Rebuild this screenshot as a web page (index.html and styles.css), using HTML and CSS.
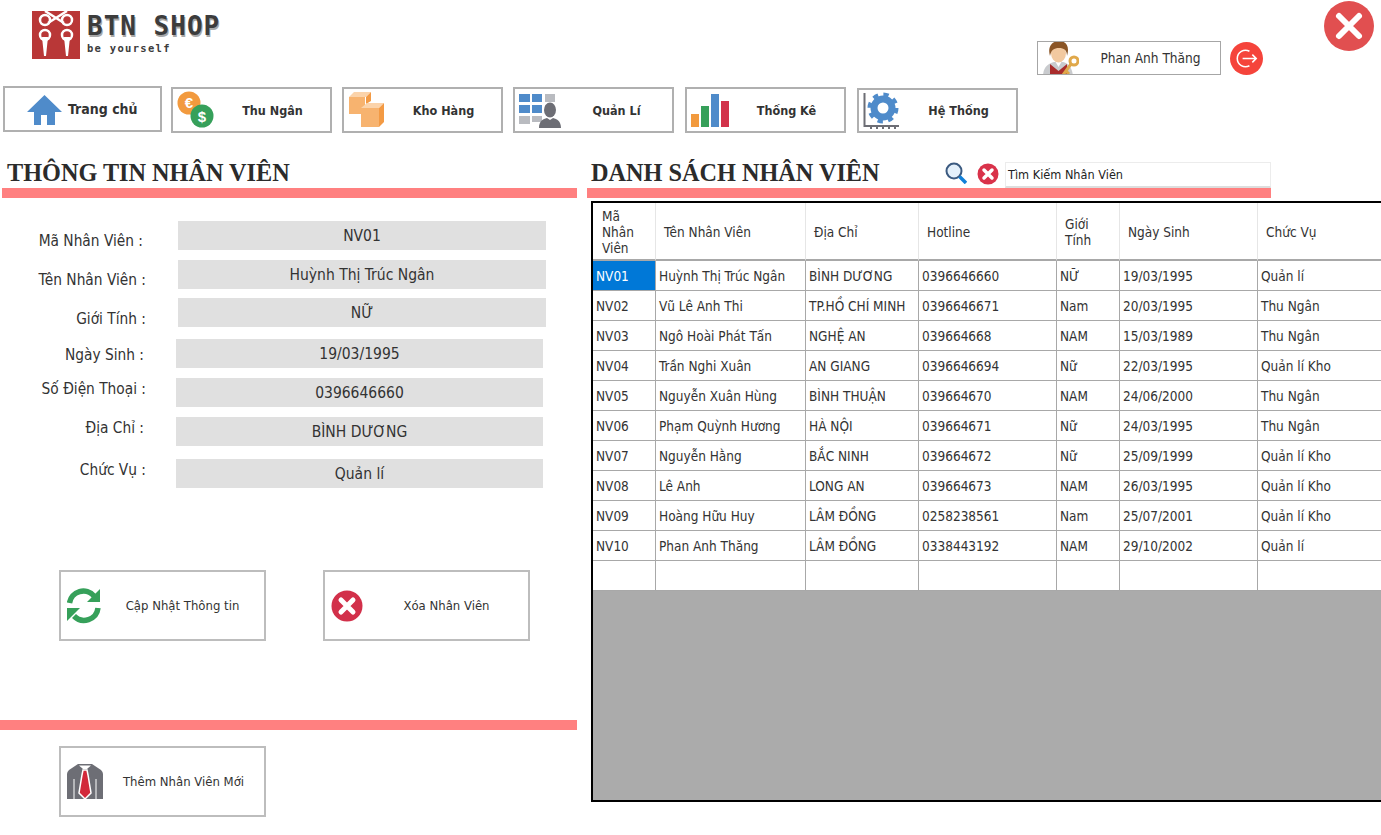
FILE: index.html

```html
<!DOCTYPE html>
<html lang="vi">
<head>
  <meta charset="UTF-8" />
  <title>BTN Shop - Nhân Viên</title>
  <link rel="stylesheet" href="styles.css">
</head>
<body>
  <header class="top">
    <div class="logo">
      <svg class="logo-mark" viewBox="0 0 48 48">
        <rect width="48" height="48" fill="#b93737"/>
        <g fill="none" stroke="#fff" stroke-width="2.5">
          <path d="M13 0 L32 12 M35 0 L16 12"/>
          <circle cx="13" cy="9" r="5"/>
          <circle cx="35" cy="9" r="5"/>
          <circle cx="13" cy="24" r="5"/>
          <circle cx="35" cy="24" r="5"/>
        </g>
        <path d="M10 26h6l-2 19h-2zM32 26h6l-2 19h-2z" fill="#fff"/>
      </svg>
      <div>
        <div class="logo-name">BTN SHOP</div>
        <div class="logo-sub">be yourself</div>
      </div>
    </div>
    <div class="user-box">
      <svg class="user-pic" viewBox="0 0 36 35">
        <path d="M0 35 C0 26 6 22 11 21 H20 C25 22 29 26 30 35Z" fill="#c9cbce"/>
        <path d="M7 35 V23 L15.500 30 L24 23 V35Z" fill="#a92c2c"/>
        <path d="M12 20 H19 L15.500 26Z" fill="#fff"/>
        <ellipse cx="15.500" cy="12" rx="7.500" ry="9.500" fill="#f2c9a0"/>
        <path d="M7 15 C4 5 10 0 16 0 C23 0 27 5 24 15 C24 9 21 7 16 7 C11 7 8 9 7 15Z" fill="#8a5526"/>
        <circle cx="31" cy="20" r="4" fill="none" stroke="#e0a84a" stroke-width="3"/>
        <path d="M28 23 L20 34 M23 30 L26 33" stroke="#e0a84a" stroke-width="3"/>
      </svg>
      <span class="user-name">Phan Anh Thăng</span>
    </div>
    <svg class="logout" viewBox="0 0 34 34">
      <circle cx="17" cy="17" r="17" fill="#f5443b"/>
      <path d="M20 9.500 A8.500 8.500 0 1 0 20 24.500" fill="none" stroke="#fff" stroke-width="1.600"/>
      <path d="M13 17 H27 M23 13 L27 17 L23 21" fill="none" stroke="#fff" stroke-width="1.600"/>
    </svg>
    <svg class="close" viewBox="0 0 50 50">
      <circle cx="25" cy="25" r="25" fill="#e14f50"/>
      <path d="M15 15 L35 35 M35 15 L15 35" stroke="#fff" stroke-width="6" stroke-linecap="round"/>
    </svg>
  </header>

  <nav class="nav">
    <a class="nav-btn nav-btn-home">
      <svg class="ico-home" viewBox="0 0 35 30"><path d="M17.500 0 L35 17 H28 V30 H20 V20 H14 V30 H7 V17 H0Z" fill="#4f8bca"/></svg>
      <span>Trang chủ</span>
    </a>
    <a class="nav-btn nav-btn-low">
      <svg class="ico" viewBox="0 0 38 38">
        <circle cx="12" cy="12" r="11.500" fill="#f29a3e"/>
        <text x="12" y="17" class="glyph" font-size="15">€</text>
        <circle cx="25" cy="25" r="11.500" fill="#36a05a"/>
        <text x="25" y="30.500" class="glyph" font-size="15">$</text>
      </svg>
      <span class="nav-text">Thu Ngân</span>
    </a>
    <a class="nav-btn nav-btn-low">
      <svg class="ico" viewBox="0 0 38 38">
        <path d="M1 6 H17 V23 H1Z" fill="#f7b36f"/>
        <path d="M1 6 L6 1 H23 L18 6Z" fill="#fbd3aa"/>
        <path d="M18 6 L23 1 V10 L18 13Z" fill="#f39a44"/>
        <path d="M13 17 H31 V36 H13Z" fill="#f7b36f"/>
        <path d="M13 17 L19 12 H36 L31 17Z" fill="#fbd3aa"/>
        <path d="M31 17 L36 12 V31 L31 36Z" fill="#f39a44"/>
      </svg>
      <span class="nav-text">Kho Hàng</span>
    </a>
    <a class="nav-btn nav-btn-low">
      <svg class="ico ico-wide" viewBox="0 0 42 36">
        <path d="M0 2h11v8H0zM13 2h10v8H13zM0 13h11v8H0zM13 13h10v8H13z" fill="#4f8bca"/>
        <path d="M26 2h10v8H26zM0 24h11v8H0zM13 24h10v6H13zM26 13h4v5h-4z" fill="#b9bbc0"/>
        <ellipse cx="31" cy="18" rx="6" ry="7.500" fill="#6d6e75"/>
        <path d="M20 36 C20 29 24 27 28 26 L31 28 L34 26 C38 27 42 29 42 36Z" fill="#6d6e75"/>
      </svg>
      <span class="nav-text">Quản Lí</span>
    </a>
    <a class="nav-btn nav-btn-low">
      <svg class="ico" viewBox="0 0 38 34">
        <rect x="0" y="21" width="8" height="13" fill="#f29a3e"/>
        <rect x="10" y="13" width="8" height="21" fill="#36a05a"/>
        <rect x="20" y="1" width="8" height="33" fill="#4f8bca"/>
        <rect x="30" y="8" width="8" height="26" fill="#d2324a"/>
      </svg>
      <span class="nav-text">Thống Kê</span>
    </a>
    <a class="nav-btn nav-btn-lowest">
      <svg class="ico" viewBox="0 0 38 36">
        <path d="M1.500 0 V33 H36" fill="none" stroke="#6d6e75" stroke-width="2"/>
        <path d="M8 33v3M14 33v3M20 33v3M26 33v3M32 33v3" stroke="#6d6e75" stroke-width="2"/>
        <circle cx="20" cy="15" r="9" fill="none" stroke="#4f8bca" stroke-width="7"/>
        <circle cx="20" cy="15" r="13.500" fill="none" stroke="#4f8bca" stroke-width="4" stroke-dasharray="5.300 5.300"/>
      </svg>
      <span class="nav-text">Hệ Thống</span>
    </a>
  </nav>

  <main class="main">
    <section class="left">
      <h2 class="title">THÔNG TIN NHÂN VIÊN</h2>
      <div class="bar"></div>

      <div class="form">
        <div class="row"><label class="lbl-low lbl-in3">Mã Nhân Viên :</label><div class="field">NV01</div></div>
        <div class="row"><label class="lbl-low">Tên Nhân Viên :</label><div class="field">Huỳnh Thị Trúc Ngân</div></div>
        <div class="row"><label class="lbl-lower">Giới Tính :</label><div class="field">NỮ</div></div>
        <div class="row row-b"><label class="lbl-in2">Ngày Sinh :</label><div class="field">19/03/1995</div></div>
        <div class="row row-b"><label class="lbl-high">Số Điện Thoại :</label><div class="field">0396646660</div></div>
        <div class="row row-b"><label class="lbl-high lbl-in2">Địa Chỉ :</label><div class="field">BÌNH DƯƠNG</div></div>
        <div class="row row-b"><label class="lbl-high">Chức Vụ :</label><div class="field">Quản lí</div></div>
      </div>

      <div class="actions">
        <a class="btn">
          <svg class="ico-btn" viewBox="0 -3 36 40">
            <path d="M2.500 14 A14 14 0 0 1 27 7" fill="none" stroke="#36a05a" stroke-width="5.500"/>
            <path d="M33 0 V13 H20Z" fill="#36a05a"/>
            <path d="M31 19 A14 14 0 0 1 7 27" fill="none" stroke="#36a05a" stroke-width="5.500"/>
            <path d="M0 19 H13 L0 32Z" fill="#36a05a"/>
          </svg>
          <span class="btn-text">Cập Nhật Thông tin</span>
        </a>
        <a class="btn">
          <svg class="ico-btn" viewBox="0 0 36 40">
            <circle cx="16" cy="20" r="15.500" fill="#d2304a"/>
            <path d="M10 14 L22 26 M22 14 L10 26" stroke="#fff" stroke-width="5" stroke-linecap="round"/>
          </svg>
          <span class="btn-text">Xóa Nhân Viên</span>
        </a>
      </div>

      <div class="bar bar-bottom"></div>

      <a class="btn btn-add">
        <svg class="ico-btn" viewBox="0 0 36 40">
          <path d="M11 2 H25 L34 8 Q36 10 36 12 V37 H0 V12 Q0 10 2 8Z" fill="#6d6e75"/>
          <path d="M12 3.500 H24 L20 7 H16Z" fill="#fff"/>
          <path d="M7 17 V37 M29 17 V37" stroke="#fff" stroke-width="1"/>
          <path d="M16 8 H20 L21 13 L24 31 L18 37 L12 31 L15 13Z" fill="#d2283a" stroke="#fff" stroke-width="1.500"/>
        </svg>
        <span class="btn-text">Thêm Nhân Viên Mới</span>
      </a>
    </section>

    <section class="right">
      <div class="right-head">
        <h2 class="title title-right">DANH SÁCH NHÂN VIÊN</h2>
        <svg class="ico-search" viewBox="0 0 22 22">
          <circle cx="9" cy="9" r="7.500" fill="#e4f0fb" stroke="#3b5a80" stroke-width="2"/>
          <path d="M14.500 14.500 L21 21" stroke="#1280d8" stroke-width="3.500"/>
        </svg>
        <svg class="ico-clear" viewBox="0 0 22 22">
          <circle cx="11" cy="11" r="10.500" fill="#d9324a"/>
          <path d="M7 7 L15 15 M15 7 L7 15" stroke="#fff" stroke-width="3.500" stroke-linecap="round"/>
        </svg>
        <div class="search">Tìm Kiếm Nhân Viên</div>
      </div>
      <div class="bar bar-right"></div>

      <div class="grid-wrap">
        <table class="grid">
          <colgroup>
            <col class="c1"><col class="c2"><col class="c3"><col class="c4"><col class="c5"><col class="c6"><col class="c7">
          </colgroup>
          <thead>
            <tr>
              <th class="th-first">Mã Nhân Viên</th>
              <th>Tên Nhân Viên</th>
              <th>Địa Chỉ</th>
              <th>Hotline</th>
              <th>Giới Tính</th>
              <th>Ngày Sinh</th>
              <th>Chức Vụ</th>
            </tr>
          </thead>
          <tbody>
            <tr><td class="selected">NV01</td><td>Huỳnh Thị Trúc Ngân</td><td>BÌNH DƯƠNG</td><td>0396646660</td><td>NỮ</td><td>19/03/1995</td><td>Quản lí</td></tr>
            <tr><td>NV02</td><td>Vũ Lê Anh Thi</td><td>TP.HỒ CHÍ MINH</td><td>0396646671</td><td>Nam</td><td>20/03/1995</td><td>Thu Ngân</td></tr>
            <tr><td>NV03</td><td>Ngô Hoài Phát Tấn</td><td>NGHỆ AN</td><td>039664668</td><td>NAM</td><td>15/03/1989</td><td>Thu Ngân</td></tr>
            <tr><td>NV04</td><td>Trần Nghi Xuân</td><td>AN GIANG</td><td>0396646694</td><td>Nữ</td><td>22/03/1995</td><td>Quản lí Kho</td></tr>
            <tr><td>NV05</td><td>Nguyễn Xuân Hùng</td><td>BÌNH THUẬN</td><td>039664670</td><td>NAM</td><td>24/06/2000</td><td>Thu Ngân</td></tr>
            <tr><td>NV06</td><td>Phạm Quỳnh Hương</td><td>HÀ NỘI</td><td>039664671</td><td>Nữ</td><td>24/03/1995</td><td>Thu Ngân</td></tr>
            <tr><td>NV07</td><td>Nguyễn Hằng</td><td>BẮC NINH</td><td>039664672</td><td>Nữ</td><td>25/09/1999</td><td>Quản lí Kho</td></tr>
            <tr><td>NV08</td><td>Lê Anh</td><td>LONG AN</td><td>039664673</td><td>NAM</td><td>26/03/1995</td><td>Quản lí Kho</td></tr>
            <tr><td>NV09</td><td>Hoàng Hữu Huy</td><td>LÂM ĐỒNG</td><td>0258238561</td><td>Nam</td><td>25/07/2001</td><td>Quản lí Kho</td></tr>
            <tr><td>NV10</td><td>Phan Anh Thăng</td><td>LÂM ĐỒNG</td><td>0338443192</td><td>NAM</td><td>29/10/2002</td><td>Quản lí</td></tr>
            <tr><td></td><td></td><td></td><td></td><td></td><td></td><td></td></tr>
          </tbody>
        </table>
      </div>
    </section>
  </main>
</body>
</html>
```

FILE: styles.css

```css
* { box-sizing: border-box; }
html, body { margin: 0; height: 835px; overflow: hidden; }
body { background: #fff; color: #333; font-family: "DejaVu Sans Condensed", "Noto Sans", sans-serif; font-size: 13px; }

/* header */
.top { display: flex; height: 86px; padding-right: 7px; }
.logo { display: flex; gap: 7px; margin: 11px auto 0 32px; height: 48px; }
.logo-mark { width: 48px; height: 48px; }
.logo-name { font-family: "DejaVu Sans Mono", monospace; font-weight: bold; font-size: 26px; letter-spacing: 1px; line-height: 30px; margin-top: 0; color: #3c3c3c; text-shadow: 1px 2px 0 #a8a8a8; white-space: nowrap; }
.logo-sub { font-family: "DejaVu Sans Mono", monospace; font-weight: bold; font-size: 10.500px; letter-spacing: 1.300px; line-height: 12px; margin-top: 1px; color: #3c3c3c; }
.user-box { display: flex; align-items: center; width: 184px; height: 34px; margin-top: 41px; border: 1px solid #a6a6a6; overflow: hidden; }
.user-pic { width: 36px; height: 35px; margin-left: 5px; flex: none; }
.user-name { flex: 1; text-align: center; font-size: 13.600px; padding-left: 2px; }
.logout { width: 33px; height: 33px; margin: 42px 0 0 9px; }
.close { width: 50px; height: 50px; margin: 1px 0 0 61px; }

/* nav */
.nav { display: grid; grid-template-columns: 168px 171px 171px 172px 172px 161px; padding-left: 3px; height: 48px; }
.nav-btn { display: flex; align-items: center; width: 161px; height: 46px; padding-left: 4px; border: 2px solid #b0b0b0; font-weight: bold; font-size: 12.500px; color: #333; }
.nav-btn-home { width: 159px; padding-left: 22px; gap: 6px; }
.nav-btn-home span { font-size: 14px; }
.nav-btn-low { margin-top: 1px; }
.nav-btn-lowest { margin-top: 2px; height: 45px; }
.ico-home { width: 35px; height: 30px; margin-top: 2px; }
.ico { width: 38px; height: 38px; flex: none; }
.ico-wide { width: 42px; }
.nav-text { flex: 1; text-align: center; }
.glyph { fill: #fff; font-family: "Liberation Sans", sans-serif; font-weight: bold; text-anchor: middle; }

/* main columns */
.main { display: flex; }
.left { width: 587px; flex: none; }
.right { flex: 1; min-width: 0; }
.title { margin: 0; height: 54px; padding: 24px 0 0 7px; font-family: "Liberation Serif", serif; font-size: 24.250px; line-height: 30px; font-weight: bold; color: #2b2b2b; white-space: nowrap; }
.title-right { padding-left: 4px; width: 358px; flex: none; }
.bar { height: 10px; margin-left: 2px; width: 575px; background: #ff8080; }
.bar-bottom { width: 577px; margin: 0; }
.bar-right { width: 684px; margin-left: 0; }

/* employee form */
.form { display: grid; grid-template-rows: 39px 38px 41px 39px 39px 42px 29px; margin-top: 23px; height: 267px; }
.row { display: grid; grid-template-columns: 146px 368px; column-gap: 32px; align-items: start; }
.row-b { grid-template-columns: 146px 367px; column-gap: 30px; }
.row label { text-align: right; font-size: 15.300px; line-height: 19px; height: 29px; padding-top: 7px; white-space: nowrap; }
.row label.lbl-low { padding-top: 11px; height: 39px; }
.row label.lbl-lower { padding-top: 12px; height: 39px; }
.row label.lbl-high { padding-top: 2px; height: 29px; }
.row label.lbl-in2 { padding-right: 2px; }
.row label.lbl-in3 { padding-right: 3px; }
.field { height: 29px; line-height: 30px; background: #e0e0e0; text-align: center; font-size: 15.500px; }
.row-b .field { line-height: 31px; }

/* buttons */
.actions { display: flex; gap: 57px; margin: 82px 0 79px 59px; }
.btn { display: flex; align-items: center; width: 207px; height: 71px; padding-left: 6px; border: 2px solid #bdbdbd; }
.ico-btn { width: 36px; height: 40px; flex: none; }
.btn-text { flex: 1; text-align: center; padding-right: 2px; }
.btn-add { margin: 16px 0 0 59px; }
.btn-add .btn-text { padding-right: 0; }

/* list side */
.right-head { display: flex; align-items: flex-start; height: 54px; }
.ico-search { width: 22px; height: 22px; margin-top: 28px; }
.ico-clear { width: 22px; height: 22px; margin: 29px 0 0 10px; }
.search { width: 266px; height: 26px; margin: 28px 0 0 6px; padding: 2px 2px 0; line-height: 19px; font-size: 12.600px; background: #fff; border: 1px solid #ececec; border-bottom: 2px solid #ddd; color: #222; }
.grid-wrap { width: 794px; height: 601px; margin: 3px 0 0 4px; border: 2px solid #000; background: #ababab; overflow: hidden; }
.grid { table-layout: fixed; width: 865px; border-collapse: separate; border-spacing: 0; background: #fff; font-size: 13.500px; }
.c1 { width: 63px; }
.c2 { width: 150px; }
.c3 { width: 113px; }
.c4 { width: 138px; }
.c5 { width: 63px; }
.c6 { width: 138px; }
.c7 { width: 200px; }
.grid th { height: 58px; padding: 1px 8px 0; text-align: left; font-weight: normal; line-height: 16px; border-right: 1px solid #e6e6e6; border-bottom: 2px solid #a8a8a8; }
.grid th.th-first { padding: 1px 9px 0; }
.grid td { height: 30px; padding: 0 3px; white-space: nowrap; overflow: hidden; border-right: 1px solid #a8a8a8; border-bottom: 1px solid #a8a8a8; }
.grid td.selected { background: #0078d7; color: #fff; }
```
